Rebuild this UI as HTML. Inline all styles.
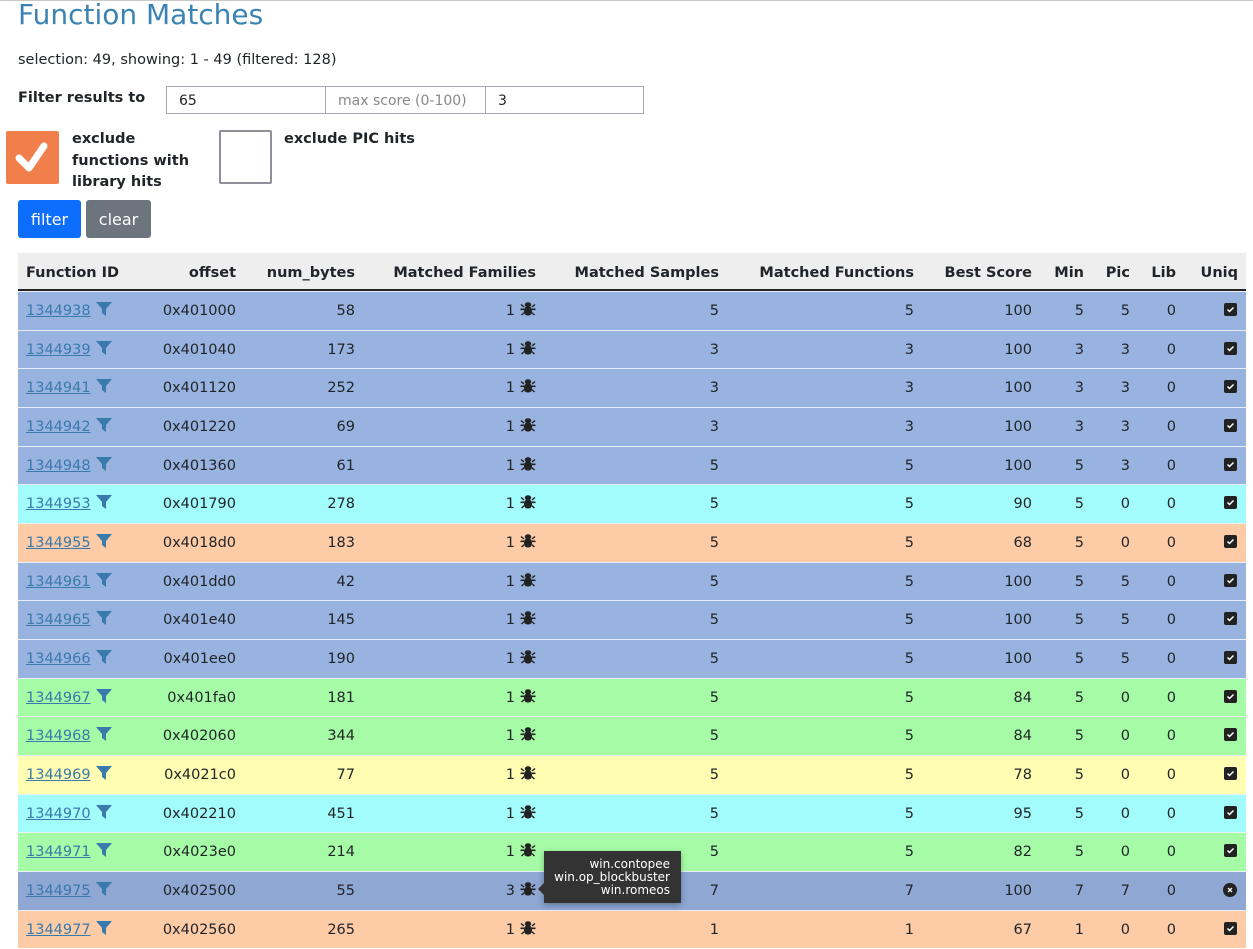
<!DOCTYPE html>
<html><head><meta charset="utf-8"><style>
*{box-sizing:border-box;margin:0;padding:0}
body{width:1253px;height:949px;overflow:hidden;background:#fff;font-family:"DejaVu Sans","Liberation Sans",sans-serif;color:#212529;position:relative}
.a{position:absolute}
h1{position:absolute;left:18px;top:-2px;font-size:28px;font-weight:400;color:#3a83b4}
.inp{position:absolute;top:86px;height:28px;border:1px solid #a8a8b0;font-size:14px;padding:6px 12px 0;background:#fff}
.lbl{font-weight:700;font-size:14.5px;line-height:21.5px}
.btn{position:absolute;top:200px;height:38px;border-radius:3px;color:#fff;font-size:16px;line-height:40px;text-align:center}
.row{position:absolute;left:18px;width:1228px;height:38.67px;border-top:1px solid #e8eef5;font-size:14.5px}
.c{position:absolute;top:1px;line-height:37px;text-align:right}
.hd{position:absolute;left:18px;top:253px;width:1228px;height:38px;background:#eee;border-bottom:2px solid #222;font-weight:700;font-size:14.5px}
.hd .c{line-height:37px;top:2px}
a{color:#3a7aac;text-decoration:underline}
.b{background:#98b3e0}.cy{background:#a3fcfc}.p{background:#fdcba6}.g{background:#a6fca6}.y{background:#fefdb2}.db{background:#8ea7d3}
</style></head><body>
<div class="a" style="left:0;top:0;width:1253px;height:1px;background:#c8c8c8"></div>
<h1>Function Matches</h1>
<div class="a" style="left:18px;top:52px;font-size:14.5px">selection: 49, showing: 1 - 49 (filtered: 128)</div>
<div class="a lbl" style="left:18px;top:88px">Filter results to</div>
<div class="inp" style="left:166px;width:160px">65</div>
<div class="inp" style="left:325px;width:161px;color:#888">max score (0-100)</div>
<div class="inp" style="left:485px;width:159px">3</div>
<div class="a" style="left:6px;top:131px;width:53px;height:53px;background:#f07f4c;border-radius:2px">
<svg width="53" height="53" viewBox="0 0 53 53"><path d="M13 27 L23 37 L38 15" fill="none" stroke="#fff" stroke-width="7" stroke-linecap="round" stroke-linejoin="round"/></svg></div>
<div class="a lbl" style="left:72px;top:129px">exclude<br>functions with<br>library hits</div>
<div class="a" style="left:219px;top:130px;width:53px;height:54px;border:2px solid #8f8f9a;border-radius:2px"></div>
<div class="a lbl" style="left:284px;top:129px">exclude PIC hits</div>
<div class="btn" style="left:18px;width:63px;background:#0d6efd">filter</div>
<div class="btn" style="left:86px;width:65px;background:#6c757d">clear</div>
<div class="hd">
<div class="c" style="left:8px;text-align:left">Function ID</div>
<div class="c" style="right:1010px">offset</div>
<div class="c" style="right:891px">num_bytes</div>
<div class="c" style="right:710px">Matched Families</div>
<div class="c" style="right:527px">Matched Samples</div>
<div class="c" style="right:332px">Matched Functions</div>
<div class="c" style="right:214px">Best Score</div>
<div class="c" style="right:162px">Min</div>
<div class="c" style="right:116px">Pic</div>
<div class="c" style="right:70px">Lib</div>
<div class="c" style="right:8px">Uniq</div>
</div>
<div id="t"></div>
<div class="a" style="left:544px;top:851px;width:137px;height:52px;background:#333;color:#fff;font-size:12px;line-height:13px;text-align:right;padding:7px 11px 0 0;box-shadow:0 2px 6px rgba(0,0,0,.3)">win.contopee<br>win.op_blockbuster<br>win.romeos</div>
<div class="a" style="left:538px;top:883px;width:0;height:0;border-top:6px solid transparent;border-bottom:6px solid transparent;border-right:6px solid #333"></div>
<script>
var d=[["1344938","0x401000",58,1,5,5,100,5,5,0,"b"],["1344939","0x401040",173,1,3,3,100,3,3,0,"b"],["1344941","0x401120",252,1,3,3,100,3,3,0,"b"],["1344942","0x401220",69,1,3,3,100,3,3,0,"b"],["1344948","0x401360",61,1,5,5,100,5,3,0,"b"],["1344953","0x401790",278,1,5,5,90,5,0,0,"cy"],["1344955","0x4018d0",183,1,5,5,68,5,0,0,"p"],["1344961","0x401dd0",42,1,5,5,100,5,5,0,"b"],["1344965","0x401e40",145,1,5,5,100,5,5,0,"b"],["1344966","0x401ee0",190,1,5,5,100,5,5,0,"b"],["1344967","0x401fa0",181,1,5,5,84,5,0,0,"g"],["1344968","0x402060",344,1,5,5,84,5,0,0,"g"],["1344969","0x4021c0",77,1,5,5,78,5,0,0,"y"],["1344970","0x402210",451,1,5,5,95,5,0,0,"cy"],["1344971","0x4023e0",214,1,5,5,82,5,0,0,"g"],["1344975","0x402500",55,3,7,7,100,7,7,0,"db"],["1344977","0x402560",265,1,1,1,67,1,0,0,"p"]];
var bug='<svg width="16" height="16" viewBox="0 0 16 16" style="vertical-align:-2px;margin-left:5px"><g fill="#222"><ellipse cx="8" cy="3.8" rx="3.2" ry="2.5"/><rect x="4" y="5.5" width="8" height="9" rx="3.5"/><path d="M0.5 7.5h3.5v1.6H0.5zM12 7.5h3.5v1.6H12zM1 13.5l3-2.5v1.8L2 14.5zM15 13.5l-3-2.5v1.8l2 1.7zM1.5 3l3 2.5-1 1L0.5 4zM14.5 3l-3 2.5 1 1L15.5 4z"/></g></svg>';
var fil='<svg width="16" height="14" viewBox="0 0 16 14" style="vertical-align:-1px;margin-left:5px"><path d="M0 0h16L10 7v7L6 11V7z" fill="#3a7aac"/></svg>';
var chk='<svg width="13" height="13" viewBox="0 0 13 13"><rect width="13" height="13" rx="2" fill="#222"/><path d="M3.5 6.5l2 2 4-4" stroke="#fff" stroke-width="1.5" fill="none"/></svg>';
var xx='<svg width="14" height="14" viewBox="0 0 14 14"><circle cx="7" cy="7" r="7" fill="#222"/><path d="M5 5l4 4M9 5l-4 4" stroke="#fff" stroke-width="1.3"/></svg>';
var h='';
d.forEach(function(r,i){
h+='<div class="row '+r[10]+'" style="top:'+(291+i*38.67)+'px">'+
'<div class="c" style="left:8px;text-align:left"><a>'+r[0]+'</a>'+fil+'</div>'+
'<div class="c" style="right:1010px">'+r[1]+'</div>'+
'<div class="c" style="right:891px">'+r[2]+'</div>'+
'<div class="c" style="right:710px">'+r[3]+bug+'</div>'+
'<div class="c" style="right:527px">'+r[4]+'</div>'+
'<div class="c" style="right:332px">'+r[5]+'</div>'+
'<div class="c" style="right:214px">'+r[6]+'</div>'+
'<div class="c" style="right:162px">'+r[7]+'</div>'+
'<div class="c" style="right:116px">'+r[8]+'</div>'+
'<div class="c" style="right:70px">'+r[9]+'</div>'+
'<div class="c" style="right:9px;top:11px;line-height:0">'+(r[10]=="db"?xx:chk)+'</div></div>';});
document.getElementById('t').innerHTML=h;
</script>
</body></html>
